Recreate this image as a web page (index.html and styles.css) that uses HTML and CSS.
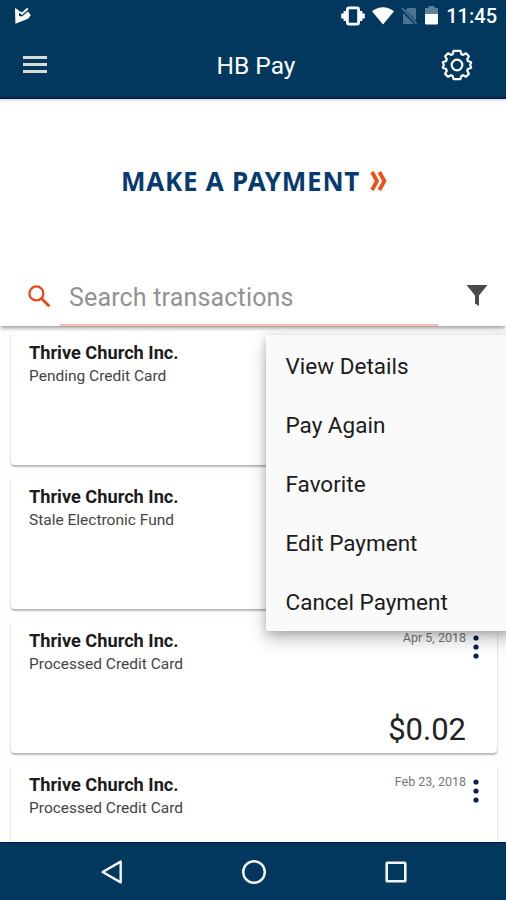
FILE: index.html
```html
<!DOCTYPE html>
<html lang="en">
<head>
<meta charset="utf-8">
<title>HB Pay</title>
<link rel="stylesheet" href="styles.css">
</head>
<body>
<div class="screen">
  <header class="top">
    <div class="status">
      <svg class="status-app" width="18" height="18" viewBox="0 0 18 18"><path d="M1 1 5 3.4V9L8 9.6 14 4.5 16.8 8.2 14 11.8 1.4 16.8Z" fill="#fff"/><path d="M5.3 4.8 8 6.8 13.8 1.6" fill="none" stroke="#fff" stroke-width="2"/></svg>
      <div class="status-icons">
        <svg width="24" height="20" viewBox="0 0 24 20"><rect x="6.4" y="1.9" width="11.2" height="16.2" rx="1.6" fill="none" stroke="#fff" stroke-width="2.8"/><path d="M3.9 5v10M20.1 5v10M1.5 7.5v5M22.5 7.5v5" stroke="#fff" stroke-width="2.6"/></svg>
        <svg width="22" height="18" viewBox="0 0 22 18"><path d="M0 4.2Q11-3.5 22 4.2L11 17.5Z" fill="#fff"/></svg>
        <svg width="17" height="18" viewBox="0 0 17 18"><path d="M6.5 1H15v13L4.5 3ZM2 6v11h11Z" fill="#4c7590"/><path d="M1 1 15.7 17" stroke="#4c7590" stroke-width="1.6"/></svg>
        <svg width="13" height="19" viewBox="0 0 13 19"><path d="M0 2h3.5V0h6v2H13v6H0Z" fill="#5c8198"/><path d="M0 8h13v9.5q0 1-1 1H1q-1 0-1-1Z" fill="#fff"/></svg>
      </div>
      <span class="clock">11:45</span>
    </div>
    <div class="appbar">
      <svg class="burger" width="24" height="20" viewBox="0 0 24 20"><path d="M0 2.6h24M0 9.6h24M0 16.6h24" stroke="#d9dad2" stroke-width="3"/></svg>
      <h1>HB Pay</h1>
      <svg class="gear" width="32" height="32" viewBox="0 0 32 32" fill="none" stroke="#fff" stroke-width="2.2" stroke-linejoin="round"><path d="M11.6 5.2 12.6 1.8H19.4L20.4 5.2 22 5.9 25 4.3 27.9 7.2 26.2 10.2 26.9 12 30.2 13.2 29.2 16 30.2 18.8 26.9 20 26.2 21.8 27.9 24.9 25 27.8 22 26.2 20.4 26.9 19.4 30.2H12.6L11.6 26.9 10 26.2 7 27.8 4.1 24.9 5.8 21.8 5.1 20 1.8 18.8 2.8 16 1.8 13.2 5.1 12 5.8 10.2 4.1 7.2 7 4.3 10 5.9Z"/><circle cx="16" cy="16" r="5.3"/></svg>
    </div>
  </header>

  <section class="pay">
    <span class="pay-label">MAKE A PAYMENT</span>
    <svg width="18" height="20" viewBox="0 0 18 20" fill="none" stroke="#f04e12" stroke-width="3.8"><path d="M2 1 7 10 2 19M9.4 1 14.4 10 9.4 19"/></svg>
  </section>

  <section class="search">
    <svg class="lens" width="23" height="23" viewBox="0 0 23 23" fill="none" stroke="#ee4618" stroke-width="2.3"><circle cx="8.4" cy="8.4" r="7"/><path d="m13.6 13.6 7.7 7.7" stroke-width="2.8"/></svg>
    <div class="field">Search transactions</div>
    <svg class="filter" width="22" height="21" viewBox="0 0 22 21"><path d="M.5 0h21L13 10.5V21L9 18.5v-8Z" fill="#4a4a4a"/></svg>
  </section>

  <main class="list">
    <article class="card">
      <div class="payee"><h2>Thrive Church Inc.</h2><p>Pending Credit Card</p></div>
    </article>
    <article class="card">
      <div class="payee"><h2>Thrive Church Inc.</h2><p>Stale Electronic Fund</p></div>
    </article>
    <article class="card">
      <div class="payee"><h2>Thrive Church Inc.</h2><p>Processed Credit Card</p></div>
      <div class="meta"><time>Apr 5, 2018</time><span class="amount">$0.02</span></div>
      <svg class="more" width="6" height="24" viewBox="0 0 6 24" fill="#0b1f50"><circle cx="3" cy="3" r="2.6"/><circle cx="3" cy="12" r="2.6"/><circle cx="3" cy="21" r="2.6"/></svg>
    </article>
    <article class="card">
      <div class="payee"><h2>Thrive Church Inc.</h2><p>Processed Credit Card</p></div>
      <div class="meta"><time>Feb 23, 2018</time></div>
      <svg class="more" width="6" height="24" viewBox="0 0 6 24" fill="#0b1f50"><circle cx="3" cy="3" r="2.6"/><circle cx="3" cy="12" r="2.6"/><circle cx="3" cy="21" r="2.6"/></svg>
    </article>
    <ul class="menu">
      <li>View Details</li>
      <li>Pay Again</li>
      <li>Favorite</li>
      <li>Edit Payment</li>
      <li>Cancel Payment</li>
    </ul>
  </main>

  <nav class="navbar">
    <svg width="24" height="26" viewBox="0 0 24 26"><path d="M20.7 2.6v20.8L2.6 13Z" fill="none" stroke="#f2f4fa" stroke-width="2.4" stroke-linejoin="round"/></svg>
    <svg width="26" height="26" viewBox="0 0 26 26"><circle cx="13" cy="13" r="10.8" fill="none" stroke="#f2f4fa" stroke-width="2.4"/></svg>
    <svg width="24" height="24" viewBox="0 0 24 24"><rect x="2.7" y="2.7" width="18.6" height="18.6" rx=".6" fill="none" stroke="#f2f4fa" stroke-width="2.6"/></svg>
  </nav>
</div>
</body>
</html>
```
FILE: styles.css
```css
* { box-sizing: border-box; margin: 0; padding: 0; }
body { font-family: Roboto, "Liberation Sans", sans-serif; background: #fff; color: #111; }
svg { display: block; flex: none; }
.screen { width: 506px; height: 900px; display: flex; flex-direction: column; overflow: hidden; }

.top { flex: none; height: 99px; background: #02385d; color: #fff; border-bottom: 2px solid #04204f; box-shadow: 0 1px 3px rgba(60, 30, 60, .25); position: relative; }
.status { height: 32px; display: flex; align-items: center; padding: 0 9px 0 14px; }
.status-icons { display: flex; align-items: center; gap: 7px; margin: -1px 0 0 auto; }
.clock { font-size: 20px; line-height: 32px; font-weight: 500; margin-left: 8px; }
.appbar { height: 65px; display: grid; grid-template-columns: 80px 1fr 80px; align-items: center; }
.burger { margin-left: 23px; }
.gear { margin-left: 15px; }
h1 { font-size: 24.5px; font-weight: 400; text-align: center; line-height: 30px; padding: 2px 0 0 6px; }

.pay { flex: none; height: 168px; display: flex; align-items: center; justify-content: center; gap: 10px; padding: 0 0 5px 3px; }
.pay-label { font: 700 26px/36px "Noto Sans", sans-serif; letter-spacing: .75px; color: #073a70; }

.search { flex: none; height: 59px; display: flex; padding-left: 28px; background: #fff; box-shadow: 0 3px 4px -1px rgba(0, 0, 0, .4); position: relative; z-index: 1; }
.lens { margin-top: 18px; }
.field { width: 378px; height: 59px; margin-left: 9px; padding-left: 9px; border-bottom: 2px solid #f8bbaf; color: #929292; font-size: 25px; line-height: 61px; letter-spacing: .17px; }
.filter { margin: 18px 0 0 28px; }

.list { flex: 1; min-height: 0; position: relative; padding: 5px 9px 0 11px; display: flex; flex-direction: column; gap: 10px; background: #fefefe; overflow: hidden; }
.card { flex: none; height: 134px; background: #fff; border-radius: 4px; box-shadow: 0 2px 2px rgba(0, 0, 0, .24), 0 1px 2px rgba(0, 0, 0, .1); display: flex; padding: 11px 18px 0 18px; }
.payee { flex: 1; }
h2 { font-size: 18.2px; line-height: 22px; font-weight: 700; color: #1c1c1c; }
.payee p { font-size: 15.5px; line-height: 22px; color: #444; margin-top: 1px; }
.meta { display: flex; flex-direction: column; align-items: flex-end; }
time { font-size: 12.5px; line-height: 16px; color: #777; }
.amount { font-size: 31px; line-height: 36px; margin-top: 66px; font-weight: 400; color: #222; }
.more { margin: 5px 0 0 7px; }

.menu { position: absolute; top: 9px; left: 266px; width: 250px; height: 296px; background: #fafafa; border-radius: 2px; box-shadow: 0 9px 18px rgba(0, 0, 0, .22), 0 2px 8px rgba(0, 0, 0, .2); list-style: none; padding: 0 0 0 19.5px; }
.menu li { height: 59px; line-height: 62px; font-size: 22.5px; color: #1c1c1c; }

.navbar { flex: none; height: 58px; background: #02385d; border-top: 1px solid #041747; display: flex; align-items: center; justify-content: space-between; padding: 0 98px 0 100px; }
```
